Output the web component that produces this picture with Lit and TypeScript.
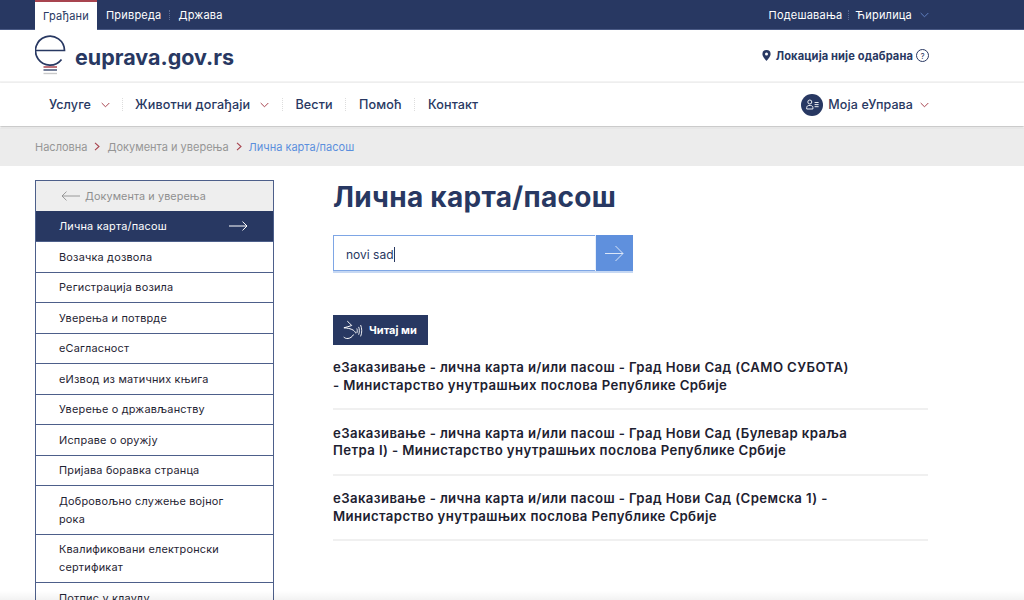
import { LitElement, html, css } from "lit";
import { customElement } from "lit/decorators.js";

const chev = (color: string) => html`<svg class="chev" width="9" height="6" viewBox="0 0 9 6" fill="none" stroke="${color}" stroke-width="1"><path d="M.7 1 4.5 4.8 8.3 1"/></svg>`;
const crumbSep = html`<svg class="sep" width="6" height="9" viewBox="0 0 6 9" fill="none" stroke="#a8444f" stroke-width="1.1"><path d="M1 .8 5 4.5 1 8.2"/></svg>`;

const items = [
  "Возачка дозвола",
  "Регистрација возила",
  "Уверења и потврде",
  "еСагласност",
  "еИзвод из матичних књига",
  "Уверење о држављанству",
  "Исправе о оружју",
  "Пријава боравка странца",
  "Добровољно служење војног рока",
  "Квалификовани електронски сертификат",
  "Потпис у клауду",
];

const results = [
  "еЗаказивање - лична карта и/или пасош - Град Нови Сад (САМО СУБОТА) - Министарство унутрашњих послова Републике Србије",
  "еЗаказивање - лична карта и/или пасош - Град Нови Сад (Булевар краља Петра I) - Министарство унутрашњих послова Републике Србије",
  "еЗаказивање - лична карта и/или пасош - Град Нови Сад (Сремска 1) - Министарство унутрашњих послова Републике Србије",
];

@customElement("app-root")
export class AppRoot extends LitElement {
  static styles = css`
    :host { display: block; position: relative; width: 1024px; height: 600px; overflow: hidden; background: #fff;
      font-family: "Inter", "DejaVu Sans", sans-serif; color: #283862; }
    * { box-sizing: border-box; }
    .top { height: 30px; background: #283862; border-bottom: 1px solid #4a5a85; display: flex; align-items: stretch; padding: 0 95px 0 35px; font-size: 11px; color: #fff; letter-spacing: .2px; }
    .tab { width: 62px; height: 30px; background: #fff; border-top: 2px solid #a8444f; color: #283862; display: flex; align-items: center; justify-content: center; }
    .top a { display: flex; align-items: center; }
    .tl { margin-left: 9px; }
    .dots { width: 1px; height: 10px; align-self: center; margin: 0 8px; border-left: 1px dotted #5a6a92; }
    .dots.tight { margin: 0 6px; }
    .grow { flex: 1; }
    .chev { flex: none; }
    .top .chev { align-self: center; margin-left: 8px; }
    .head { height: 53px; border-bottom: 2px solid #f3f3f3; display: flex; align-items: center; padding: 0 95px 0 35px; }
    .logo { display: flex; align-items: center; gap: 9px; }
    .brand { font-size: 21.5px; font-weight: 700; margin-top: 2px; }
    .loc { display: flex; align-items: center; font-size: 11.1px; font-weight: 700; letter-spacing: .12px; }
    .loc .pin { margin-right: 5px; }
    .loc .q { margin-left: 3px; width: 13px; height: 13px; border: 1px solid #283862; border-radius: 50%; font-size: 8px; font-weight: 400; display: flex; align-items: center; justify-content: center; }
    .nav { height: 43px; display: flex; align-items: center; padding: 0 95px 0 49px; font-size: 12.6px; font-weight: 500; letter-spacing: .1px; box-shadow: 0 1px 2px rgba(0,0,0,.3); position: relative; }
    .nav .chev { margin-left: 10px; }
    .nd { width: 1px; height: 13px; border-left: 1px dotted #ddd; margin: 0 12.7px; }
    .nd.first { margin: 0 12px; }
    .me { display: flex; align-items: center; font-size: 12.5px; }
    .nav .me .chev { margin-left: 7px; }
    .avatar { width: 22px; height: 22px; border-radius: 50%; background: #283862; display: flex; align-items: center; justify-content: center; margin-right: 5px; }
    .crumbs { height: 37.5px; margin-top: 2px; background: #ececec; display: flex; align-items: center; padding: 0 35px; font-size: 11px; color: #969696; }
    .sep { margin: 0 7px; }
    .crumbs b { font-weight: 400; color: #5b8fdd; }
    .body { display: flex; padding: 14.5px 0 0 35px; align-items: flex-start; }
    .side { width: 239px; flex: none; border: 1px solid #4d5f8a; border-bottom: 0; }
    .side .back { height: 30px; background: #eee; display: flex; align-items: center; padding-left: 25px; font-size: 10.8px; letter-spacing: .1px; color: #8e8e8e; gap: 5px; }
    .side .it { padding: 5.75px 28px 5.75px 23px; font-size: 10.9px; letter-spacing: .2px; line-height: 18px; border-top: 1px solid #4d5f8a; color: #1f2433; }
    .side .on { background: #283862; color: #fff; display: flex; align-items: center; justify-content: space-between; padding-right: 25px; border-top: 0; height: 30px; }
    .main { margin-left: 59px; width: 595px; flex: none; }
    h1 { margin: -1px 0 0; font-size: 28px; letter-spacing: .3px; line-height: 36px; font-weight: 700; }
    .search { display: flex; margin-top: 20px; width: 300px; height: 38px; border-bottom: 2px solid #c6d8f3; }
    .input { width: 262px; height: 36px; border: 1px solid #7ea6e5; border-right: 0; display: flex; align-items: center; padding: 2px 0 0 12px; font-size: 12px; }
    .caret { width: 1px; height: 15px; background: #283862; }
    .go { width: 38px; height: 36px; background: #5f90dd; display: flex; align-items: center; justify-content: center; border-left: 1px solid #e6eefb; }
    .read { margin-top: 42px; width: 95px; height: 30px; background: #283862; color: #fff; display: flex; align-items: center; padding-left: 10px; gap: 6px; font-size: 11px; font-weight: 700; }
    .res { border-bottom: 2px solid #f0f0f0; padding-right: 73px; margin-top: 14.5px; font-size: 13.2px; letter-spacing: .39px; line-height: 17.5px; font-weight: 600; color: #1d2130; height: 51px; }
    .list .res:first-child { margin-top: 14px; }
    .fade { position: absolute; left: 0; right: 0; bottom: 0; height: 9px; background: linear-gradient(rgba(0,0,0,0), rgba(0,0,0,.05)); pointer-events: none; }
  `;

  render() {
    return html`
      <div class="top">
        <a class="tab">Грађани</a>
        <a class="tl">Привреда</a><span class="dots"></span><a>Држава</a>
        <span class="grow"></span>
        <a>Подешавања</a><span class="dots tight"></span><a>Ћирилица</a>
        ${chev("#5f7fc0")}
      </div>
      <div class="head">
        <div class="logo">
          <svg width="31" height="41" viewBox="0 0 31 41" fill="none">
            <path d="M1 15.5H29.5A14.5 14.5 0 1 0 26.5 24.5" stroke="#283862" stroke-width="1.7"/>
            <path d="M8.5 32h13.5" stroke="#a8444f" stroke-width="1.5"/>
            <path d="M8.5 35h13.5" stroke="#283862" stroke-width="1.3"/>
            <path d="M8.5 38.5h13.5" stroke="#c9c9c9" stroke-width="1.4"/>
          </svg>
          <span class="brand">euprava.gov.rs</span>
        </div>
        <span class="grow"></span>
        <div class="loc">
          <svg class="pin" width="9" height="11" viewBox="0 0 9 11"><path fill="#283862" fill-rule="evenodd" d="M4.5 0A4.1 4.1 0 0 0 .4 4.1C.4 7 4.5 11 4.5 11s4.1-4 4.1-6.9A4.1 4.1 0 0 0 4.5 0Zm0 2.6a1.5 1.5 0 1 1 0 3 1.5 1.5 0 0 1 0-3Z"/></svg>
          Локација није одабрана
          <span class="q">?</span>
        </div>
      </div>
      <div class="nav">
        <a>Услуге</a>${chev("#a8444f")}<span class="nd first"></span>
        <a>Животни догађаји</a>${chev("#a8444f")}<span class="nd"></span>
        <a>Вести</a><span class="nd"></span>
        <a>Помоћ</a><span class="nd"></span>
        <a>Контакт</a>
        <span class="grow"></span>
        <div class="me">
          <span class="avatar">
            <svg width="13" height="11" viewBox="0 0 13 11" fill="none" stroke="#fff" stroke-width=".9">
              <circle cx="3.8" cy="3" r="2"/><path d="M.7 10V8.6c0-1.3 1-2.1 2.2-2.1h1.8c1.2 0 2.2.8 2.2 2.1V10Z"/>
              <path d="M8.6 3.5h4M8.6 5.6h4M8.6 7.7h4"/>
            </svg>
          </span>
          <a>Моја еУправа</a>${chev("#a8444f")}
        </div>
      </div>
      <div class="crumbs">
        <span>Насловна</span>${crumbSep}<span>Документа и уверења</span>${crumbSep}<b>Лична карта/пасош</b>
      </div>
      <div class="body">
        <aside class="side">
          <div class="back">
            <svg width="19" height="10" viewBox="0 0 19 10" fill="none" stroke="#8e8e8e" stroke-width=".9"><path d="M19 5H1M5.5.6 1 5l4.5 4.4"/></svg>
            Документа и уверења
          </div>
          <div class="it on">Лична карта/пасош
            <svg width="19" height="10" viewBox="0 0 19 10" fill="none" stroke="#fff" stroke-width="1"><path d="M0 5h18M13.5.6 18 5l-4.5 4.4"/></svg>
          </div>
          ${items.map((t) => html`<div class="it">${t}</div>`)}
        </aside>
        <main class="main">
          <h1>Лична карта/пасош</h1>
          <div class="search">
            <div class="input">novi sad<span class="caret"></span></div>
            <div class="go">
              <svg width="19" height="17" viewBox="0 0 19 17" fill="none" stroke="#dbe6f8" stroke-width="1"><path d="M0 8.5h18M10.5 1 18 8.5 10.5 16"/></svg>
            </div>
          </div>
          <div class="read">
            <svg width="20" height="20" viewBox="0 0 20 20" fill="none" stroke="#fff" stroke-width="1">
              <path d="M4.3 1.2C5.5 2.6 7.6 3.8 8.7 5.5 6.5 6.6 3.2 6.9.9 7.8 3.8 8 7.8 8.5 10.3 10.2 11.5 11 12.6 12.3 12.6 13.3M.6 16.8c1.6 2.4 7 2.8 10-2.3"/>
              <path d="M13.8 8.5c.6 1.3.6 3.2 0 4.6M15.6 6.9c1 2 1 5.7 0 7.8M17.6 5c1.5 3 1.5 8.4 0 11.4" stroke-width=".9"/>
            </svg>
            Читај ми
          </div>
          <div class="list">
            ${results.map((r) => html`<div class="res">${r}</div>`)}
          </div>
        </main>
      </div>
      <div class="fade"></div>
    `;
  }
}
